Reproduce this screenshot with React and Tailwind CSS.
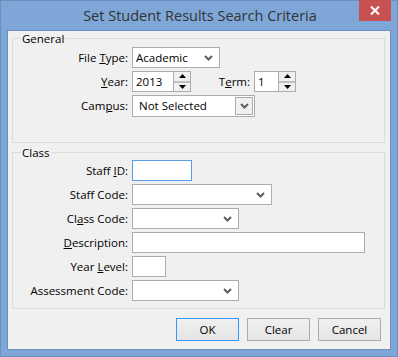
const font = { fontFamily: '"Segoe UI", "Open Sans", "Liberation Sans", sans-serif' };

function Chevron() {
  return (
    <svg width="9" height="6" viewBox="0 0 9 6" className="shrink-0">
      <path d="M1 1 L4.5 4.5 L8 1" fill="none" stroke="#5f5f5f" strokeWidth="2" />
    </svg>
  );
}

function Select({ width, value }) {
  return (
    <div className={`flex items-center justify-end h-[21px] ${width} bg-white border border-[#acacac] pl-[3px] pr-[6px]`}>
      {value && <span className="flex-1 truncate">{value}</span>}
      <Chevron />
    </div>
  );
}

function Combo({ width, value }) {
  return (
    <div className={`flex items-stretch h-[22px] ${width} bg-white border border-[#acacac]`}>
      <span className="flex-1 flex items-center pl-[6px]">{value}</span>
      <div className="w-[18px] m-[1px] border border-[#acacac] bg-[#f0f0f0] flex items-center justify-center">
        <Chevron />
      </div>
    </div>
  );
}

function Spinner({ width, value }) {
  return (
    <div className={`flex items-stretch h-[21px] ${width} bg-white border border-[#acacac]`}>
      <span className="flex-1 flex items-center pl-[3px]">{value}</span>
      <div className="w-[17px] flex flex-col border-l border-[#acacac] bg-[#f0f0f0]">
        <div className="flex-1 flex items-center justify-center">
          <svg width="7" height="4" viewBox="0 0 7 4"><path d="M3.5 0 L7 4 L0 4 Z" fill="#000" /></svg>
        </div>
        <div className="h-[2px] bg-[#c0c0c0]" />
        <div className="flex-1 flex items-center justify-center">
          <svg width="7" height="4" viewBox="0 0 7 4"><path d="M0 0 L7 0 L3.5 4 Z" fill="#000" /></svg>
        </div>
      </div>
    </div>
  );
}

function TextBox({ width, focused }) {
  return (
    <div className={`h-[21px] ${width} bg-white border ${focused ? 'border-[#569de5]' : 'border-[#acacac]'}`} />
  );
}

function Row({ label, children }) {
  return (
    <div className="flex items-center">
      <div className="w-[119px] shrink-0 text-right pr-[4px]">{label}</div>
      {children}
    </div>
  );
}

function Button({ children, focused }) {
  return (
    <button
      className={`w-[63px] h-[23px] border ${focused ? 'border-[#3399ff]' : 'border-[#acacac]'} bg-gradient-to-b from-[#f0f0f0] to-[#e5e5e5] text-black`}
      style={font}
    >
      {children}
    </button>
  );
}

export default function App() {
  return (
    <div className="w-[398px] h-[357px] bg-[#7ea7d8] border border-[#6b8fbe] flex flex-col text-[11.5px] text-black" style={font}>
      <div className="h-[29px] flex items-start relative">
        <div className="flex-1 text-center text-[14.5px] text-[#333] pt-[4px] pl-[2px]">
          Set Student Results Search Criteria
        </div>
        <div className="absolute right-[6px] top-[-1px] w-[32px] h-[21px] bg-[#c75050] flex items-center justify-center">
          <svg width="10" height="9" viewBox="0 0 10 9">
            <path d="M1 0.5 L9 8.5 M9 0.5 L1 8.5" stroke="#fff" strokeWidth="2" />
          </svg>
        </div>
      </div>

      <div className="flex-1 mx-[6px] mb-[6px] bg-[#f0f0f0] border border-[#6b8fbe] flex flex-col px-[4px]">
        <fieldset className="border border-[#dcdcdc] mr-[1px] pb-[25px]">
          <legend className="ml-[8px] px-[1px] leading-[15px]">General</legend>
          <div className="flex flex-col gap-[3px] mt-[1px]">
            <Row label={<>File <u>T</u>ype:</>}>
              <Select width="w-[88px]" value="Academic" />
            </Row>
            <Row label={<><u>Y</u>ear:</>}>
              <Spinner width="w-[59px]" value="2013" />
              <div className="w-[63px] text-right pr-[4px]">T<u>e</u>rm:</div>
              <Spinner width="w-[42px]" value="1" />
            </Row>
            <Row label={<>Cam<u>p</u>us:</>}>
              <Combo width="w-[123px]" value="Not Selected" />
            </Row>
          </div>
        </fieldset>

        <fieldset className="border border-[#dcdcdc] mr-[1px] mt-[2px] pb-[7px]">
          <legend className="ml-[8px] px-[1px] leading-[15px]">Class</legend>
          <div className="flex flex-col gap-[3px]">
            <Row label={<>Staff <u>I</u>D:</>}>
              <TextBox width="w-[60px]" focused />
            </Row>
            <Row label={<>Staf<u>f</u> Code:</>}>
              <Select width="w-[140px]" />
            </Row>
            <Row label={<>Cl<u>a</u>ss Code:</>}>
              <Select width="w-[107px]" />
            </Row>
            <Row label={<><u>D</u>escription:</>}>
              <TextBox width="w-[233px]" />
            </Row>
            <Row label={<>Year <u>L</u>evel:</>}>
              <TextBox width="w-[34px]" />
            </Row>
            <Row label="Assessment Code:">
              <Select width="w-[107px]" />
            </Row>
          </div>
        </fieldset>

        <div className="flex justify-end gap-[8px] mt-[9px] mr-[5px]">
          <Button focused>OK</Button>
          <Button>Clear</Button>
          <Button>Cancel</Button>
        </div>
      </div>
    </div>
  );
}
